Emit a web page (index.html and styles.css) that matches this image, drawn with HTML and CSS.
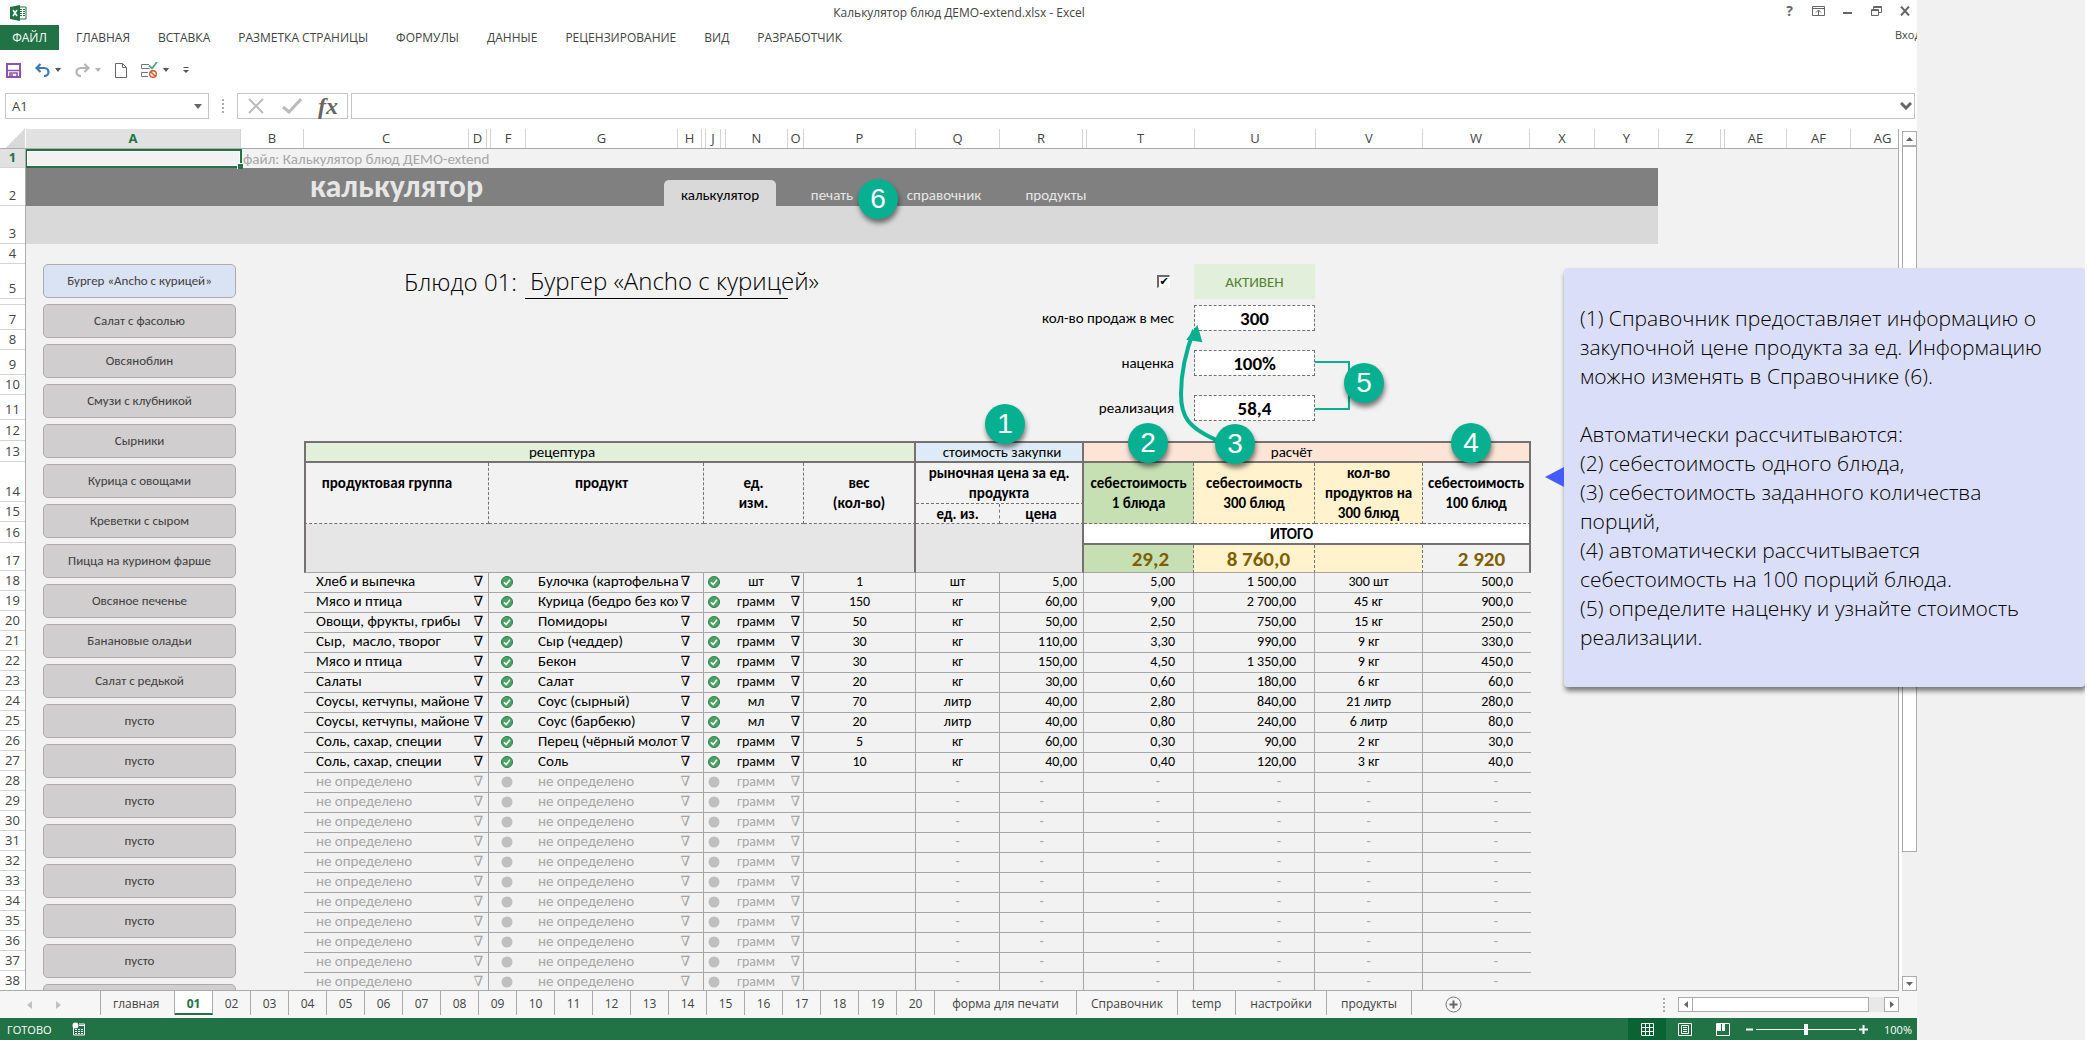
FILE: index.html
```html
<!DOCTYPE html>
<html lang="ru">
<head>
<meta charset="utf-8">
<title>Калькулятор блюд ДЕМО-extend.xlsx - Excel</title>
<link rel="stylesheet" href="styles.css">
</head>
<body>
<svg class="sprite" aria-hidden="true">
  <symbol id="ok" viewBox="0 0 12 12"><circle cx="6" cy="6" r="5.5" fill="#4aa564" stroke="#2c7c46"/><path d="M3 6.2l2.2 2.3L9 3.8" fill="none" stroke="#fff" stroke-width="1.6"/></symbol>
  <symbol id="off" viewBox="0 0 12 12"><circle cx="6" cy="6" r="5.5" fill="#bfbfbf"/></symbol>
  <symbol id="caret" viewBox="0 0 6 4"><path d="M0 0h6L3 4z" fill="currentColor"/></symbol>
</svg>

<div class="app">
  <header class="titlebar">
    <svg class="logo" width="17" height="16" viewBox="0 0 17 16"><path d="M8 2h8v12H8z" fill="#fff" stroke="#217346"/><path d="M10 4.500h2M13 4.500h2M10 6.500h2M13 6.500h2M10 8.500h2M13 8.500h2M10 10.500h2M13 10.500h2" stroke="#217346"/><path d="M0 2l10-2v16L0 14z" fill="#217346"/><path d="M3 5l4 6M7 5l-4 6" stroke="#fff" stroke-width="1.500"/></svg>
    <h1 class="doc-title">Калькулятор блюд ДЕМО-extend.xlsx - Excel</h1>
    <div class="win-buttons">
      <button class="win help" aria-label="Справка">?</button>
      <button class="win" aria-label="Параметры ленты"><svg width="13" height="10" viewBox="0 0 13 10"><path d="M.5.5h12v9H.5zM1 2.500h11M6.500 9V4M4 6.500L6.500 4 9 6.500" fill="none" stroke="#666"/></svg></button>
      <button class="win" aria-label="Свернуть"><svg width="10" height="10" viewBox="0 0 10 10"><path d="M0 7h9" stroke="#666" stroke-width="2"/></svg></button>
      <button class="win" aria-label="Развернуть"><svg width="11" height="10" viewBox="0 0 11 10"><path d="M.5 3.500h7v6h-7zM.5 4.500h7M2.500 3V.5h8v6H8M2.500 1.500h8" fill="none" stroke="#666"/></svg></button>
      <button class="win" aria-label="Закрыть"><svg width="11" height="10" viewBox="0 0 11 10"><path d="M1 .5l8 9M9 .5l-8 9" stroke="#666" stroke-width="2"/></svg></button>
    </div>
  </header>

  <nav class="ribbon">
    <button class="file">ФАЙЛ</button>
    <button>ГЛАВНАЯ</button>
    <button>ВСТАВКА</button>
    <button>РАЗМЕТКА СТРАНИЦЫ</button>
    <button>ФОРМУЛЫ</button>
    <button>ДАННЫЕ</button>
    <button>РЕЦЕНЗИРОВАНИЕ</button>
    <button>ВИД</button>
    <button>РАЗРАБОТЧИК</button>
    <span class="login"><a href="#">Вход</a></span>
  </nav>

  <div class="quick">
    <button aria-label="Сохранить"><svg width="15" height="15" viewBox="0 0 15 15"><path d="M1 1h13v13H1z" fill="none" stroke="#8d53ad" stroke-width="2"/><path d="M2 7.500h11M4 14v-4h7v4M6 11v3" fill="none" stroke="#8d53ad" stroke-width="1.600"/></svg></button>
    <button aria-label="Отменить"><svg width="15" height="14" viewBox="0 0 15 14"><path d="M5.500 1L1.500 5l4 4M1.500 5H9c6 0 6 8 0 8" fill="none" stroke="#3c78b8" stroke-width="2.200"/></svg><svg class="caret" width="6" height="4"><use href="#caret"/></svg></button>
    <button class="dim" aria-label="Вернуть"><svg width="15" height="14" viewBox="0 0 15 14"><path d="M9.500 1l4 4-4 4M13.500 5H6C0 5 0 13 6 13" fill="none" stroke="#b5b5b5" stroke-width="2.200"/></svg><svg class="caret" width="6" height="4"><use href="#caret"/></svg></button>
    <button aria-label="Создать"><svg width="12" height="15" viewBox="0 0 12 15"><path d="M.5.5h7l4 4v10H.5zM7.500.5v4h4" fill="none" stroke="#666"/></svg></button>
    <button aria-label="Проверка данных"><svg width="17" height="16" viewBox="0 0 17 16"><path d="M8 2.500H.5v4h8M7 10.500H.5v4H7" fill="none" stroke="#777"/><path d="M8 3.500l3 3L16 0" fill="none" stroke="#4ca58a" stroke-width="1.800"/><circle cx="12" cy="12" r="3.300" fill="none" stroke="#d9532c" stroke-width="1.400"/><path d="M9.700 9.700l4.600 4.600" stroke="#d9532c" stroke-width="1.400"/></svg><svg class="caret" width="6" height="4"><use href="#caret"/></svg></button>
    <button aria-label="Настройка панели"><svg width="6" height="6" viewBox="0 0 6 6"><path d="M.5.5h5" stroke="#555"/><path d="M0 3h6L3 6z" fill="#555"/></svg></button>
  </div>

  <div class="formula-row">
    <label class="name-box"><input type="text" value="A1" aria-label="Имя ячейки"><svg width="8" height="5" viewBox="0 0 8 5"><path d="M0 0h8L4 5z" fill="#666"/></svg></label>
    <svg class="grip" width="2" height="14" viewBox="0 0 2 14"><path d="M0 0h2v2H0zM0 4h2v2H0zM0 8h2v2H0zM0 12h2v2H0z" fill="#ababab"/></svg>
    <div class="fx-box">
      <button aria-label="Отмена"><svg width="18" height="16" viewBox="0 0 18 16"><path d="M2 1l14 14M16 1L2 15" stroke="#bbb" stroke-width="2"/></svg></button>
      <button aria-label="Ввод"><svg width="20" height="16" viewBox="0 0 20 16"><path d="M1 9l6 5L19 1" fill="none" stroke="#bbb" stroke-width="3"/></svg></button>
      <button class="fx" aria-label="Вставить функцию">fx</button>
    </div>
    <label class="formula"><input type="text" aria-label="Строка формул"><svg width="12" height="8" viewBox="0 0 12 8"><path d="M1 1l5 5 5-5" fill="none" stroke="#666" stroke-width="3"/></svg></label>
  </div>

  <div class="workspace">
    <div class="sheet">
      <div class="col-heads" id="cols"><div class="corner"></div></div>
      <div class="sheet-body">
        <div class="row-heads" id="rows"></div>
        <main class="canvas">
          <div class="file-row"><div class="selected-cell"></div><span>файл: Калькулятор блюд ДЕМО-extend</span></div>
          <div class="band">
            <h2>калькулятор</h2>
            <nav class="tabs">
              <a class="on" href="#">калькулятор</a>
              <a href="#">печать</a>
              <a href="#">справочник</a>
              <a href="#">продукты</a>
            </nav>
          </div>
          <div class="subband"></div>
          <div class="content">
            <aside class="dishes" id="dishes"></aside>
            <section class="dish">
              <form class="dish-form">
                <div class="dish-title">
                  <label for="active">Блюдо 01:</label>
                  <span class="dish-name">Бургер «Ancho с курицей»</span>
                  <input id="active" class="active-check" type="checkbox" checked>
                </div>
                <output class="state">АКТИВЕН</output>
                <label for="sales">кол-во продаж в мес</label><input id="sales" type="text" value="300">
                <label for="markup">наценка</label><input id="markup" class="dark" type="text" value="100%">
                <label for="price">реализация</label><input id="price" type="text" value="58,4">
              </form>
              <table class="recipe">
                <colgroup><col class="c-group"><col class="c-d"><col class="c-f"><col class="c-g"><col class="c-h"><col class="c-j"><col class="c-n"><col class="c-o"><col class="c-p"><col class="c-q"><col class="c-q"><col class="c-t"><col class="c-u"><col class="c-v"><col class="c-w"></colgroup>
                <thead>
                  <tr class="r13"><th class="green" colspan="9">рецептура</th><th class="blue" colspan="2">стоимость закупки</th><th class="peach" colspan="4">расчёт</th></tr>
                  <tr class="r14">
                    <th class="one left" colspan="2" rowspan="2">продуктовая группа</th>
                    <th class="one mid" colspan="3" rowspan="2">продукт</th>
                    <th colspan="3" rowspan="2">ед.<br>изм.</th>
                    <th class="thick" rowspan="2">вес<br>(кол-во)</th>
                    <th class="thick" colspan="2">рыночная цена за ед.<br>продукта</th>
                    <th class="bg-green" rowspan="2">себестоимость<br>1 блюда</th>
                    <th class="bg-yellow" rowspan="2">себестоимость<br>300 блюд</th>
                    <th class="bg-yellow" rowspan="2">кол-во<br>продуктов на<br>300 блюд</th>
                    <th class="thick" rowspan="2">себестоимость<br>100 блюд</th>
                  </tr>
                  <tr class="r15"><th>ед. из.</th><th class="thick">цена</th></tr>
                  <tr class="r16"><td class="blank left" colspan="9" rowspan="2"></td><td class="blank" colspan="2" rowspan="2"></td><th class="total-title" colspan="4">ИТОГО</th></tr>
                  <tr class="r17"><td class="bg-green">29,2</td><td class="bg-yellow">8 760,0</td><td class="bg-yellow"></td><td class="thick">2 920</td></tr>
                </thead>
                <tbody id="data"></tbody>
              </table>
            </section>
          </div>
        </main>
      </div>
    </div>
    <div class="vscroll">
      <button aria-label="Вверх"><svg width="7" height="4" viewBox="0 0 7 4"><path d="M0 4h7L3.500 0z" fill="#666"/></svg></button>
      <div class="thumb"></div>
      <button aria-label="Вниз"><svg width="7" height="4" viewBox="0 0 7 4"><path d="M0 0h7L3.500 4z" fill="#666"/></svg></button>
    </div>
  </div>

  <nav class="sheet-tabs">
    <div class="tab-arrows">
      <svg width="5" height="8" viewBox="0 0 5 8"><path d="M5 0v8L0 4z" fill="#c0c0c0"/></svg>
      <svg width="5" height="8" viewBox="0 0 5 8"><path d="M0 0v8l5-4z" fill="#c0c0c0"/></svg>
    </div>
    <div class="tab-list" id="tabs"></div>
    <button class="add" aria-label="Новый лист"><svg width="17" height="17" viewBox="0 0 17 17"><circle cx="8.500" cy="8.500" r="7.500" fill="none" stroke="#777"/><path d="M4.500 8.500h8M8.500 4.500v8" stroke="#666" stroke-width="2"/></svg></button>
    <svg class="grip right" width="2" height="14" viewBox="0 0 2 14"><path d="M0 0h2v2H0zM0 4h2v2H0zM0 8h2v2H0zM0 12h2v2H0z" fill="#ababab"/></svg>
    <div class="hscroll">
      <button aria-label="Влево"><svg width="4" height="7" viewBox="0 0 4 7"><path d="M4 0v7L0 3.500z" fill="#666"/></svg></button>
      <div class="thumb"></div><div class="track"></div>
      <button aria-label="Вправо"><svg width="4" height="7" viewBox="0 0 4 7"><path d="M0 0v7l4-3.500z" fill="#666"/></svg></button>
    </div>
  </nav>

  <footer class="status">
    <span>ГОТОВО</span>
    <svg width="14" height="14" viewBox="0 0 14 14"><path d="M1.500 5v8h11V2H7" fill="none" stroke="#fff"/><circle cx="3.500" cy="3.500" r="3" fill="#fff"/><path d="M7 3.500h5M3 7.500h2M6 7.500h2M9 7.500h2M3 9.500h2M6 9.500h2M9 9.500h2M3 11.500h2M6 11.500h2M9 11.500h2" stroke="#fff"/></svg>
    <div class="views">
      <button class="on" aria-label="Обычный"><svg width="13" height="13" viewBox="0 0 13 13"><path d="M.5.5h12v12H.5zM.5 4.500h12M.5 8.500h12M4.500.5v12M8.500.5v12" fill="none" stroke="#fff"/></svg></button>
      <button aria-label="Разметка страницы"><svg width="14" height="13" viewBox="0 0 14 13"><path d="M.5.5h13v12H.5zM3.500 2.500h7v8h-7zM5 4.500h4M5 6.500h4M5 8.500h4" fill="none" stroke="#fff"/></svg></button>
      <button aria-label="Страничный режим"><svg width="14" height="13" viewBox="0 0 14 13"><path d="M.5.5h13v12H.5z" fill="none" stroke="#fff"/><path d="M1 1h4v7H1zM6 1h3v7H6z" fill="#fff"/></svg></button>
    </div>
    <button class="zoom-btn" aria-label="Уменьшить"><svg width="7" height="7" viewBox="0 0 7 7"><path d="M0 3.500h7" stroke="#fff" stroke-width="2"/></svg></button>
    <input class="zoom" type="range" min="10" max="190" value="100" aria-label="Масштаб">
    <button class="zoom-btn" aria-label="Увеличить"><svg width="9" height="9" viewBox="0 0 9 9"><path d="M0 4.500h9M4.500 0v9" stroke="#fff" stroke-width="2"/></svg></button>
    <span class="percent">100%</span>
  </footer>
</div>

<svg class="links" width="180" height="130" viewBox="0 0 180 130">
  <path d="M44 124C10 110 4 98 4 76 4 52 10 30 17 12" fill="none" stroke="#08b092" stroke-width="4"/>
  <path d="M20 9L11 21 24 23z" fill="#08b092" stroke="#08b092" stroke-width="2"/>
  <path d="M138 44h34v47h-34" fill="none" stroke="#08b092" stroke-width="2"/>
</svg>
<span class="pin p1">1</span>
<span class="pin p2">2</span>
<span class="pin p3">3</span>
<span class="pin p4">4</span>
<span class="pin p5">5</span>
<span class="pin p6">6</span>

<aside class="callout">
  <p>(1) Справочник предоставляет информацию о закупочной цене продукта за ед. Информацию можно изменять в Справочнике (6).</p>
  <p>Автоматически рассчитываются:<br>(2) себестоимость одного блюда,<br>(3) себестоимость заданного количества порций,<br>(4) автоматически рассчитывается<br>себестоимость на 100 порций блюда.<br>(5) определите наценку и узнайте стоимость реализации.</p>
</aside>
<script src="script.js"></script>
</body>
</html>
```
FILE: styles.css
```css
* { box-sizing: border-box; }
body { margin: 0; height: 100vh; overflow: hidden; background: #f1f1f1; border-right: 2px solid #fff; position: relative; font-family: Carlito, "Open Sans", "Noto Sans", sans-serif; font-size: 15px; color: #000; }
button, input { font: inherit; color: inherit; margin: 0; padding: 0; border: 0; background: none; }
a { color: inherit; text-decoration: none; }
svg { display: block; flex: none; }
.sprite { position: absolute; width: 0; height: 0; }

.app { width: calc(100% - 168px); height: 100vh; display: flex; flex-direction: column; overflow: hidden; background: #fff; }
.titlebar, .ribbon, .formula-row, .col-heads, .row-heads, .sheet-tabs, .status { font-family: "Open Sans", "Noto Sans", sans-serif; font-size: 12px; color: #444; }

.titlebar { display: flex; align-items: center; height: 25px; padding-left: 10px; }
.doc-title { flex: 1; margin: 0; padding-left: 116px; text-align: center; font-size: 12px; font-weight: 400; }
.win-buttons { display: flex; padding-bottom: 3px; margin-right: -3px; }
.win { display: flex; justify-content: center; width: 29px; height: 14px; align-items: center; color: #666; }
.help { font-size: 14px; font-weight: 700; line-height: 14px; }

.ribbon { display: flex; height: 25px; gap: 28px; white-space: nowrap; }
.ribbon .file { width: 59px; margin-right: -11px; background: #217346; color: #fff; }
.login { width: 22px; margin-left: auto; overflow: hidden; line-height: 20px; font-size: 11px; }

.quick { display: flex; align-items: center; height: 43px; padding: 0 6px 3px; gap: 14px; color: #555; }
.quick button { display: flex; align-items: center; gap: 5px; }
.quick .dim { color: #b5b5b5; }

.formula-row { display: flex; align-items: center; height: 36px; padding: 0 2px 10px 5px; }
.name-box, .formula, .fx-box { display: flex; align-items: center; height: 26px; border: 1px solid #c6c6c6; }
.name-box { width: 204px; padding: 0 6px; font-size: 13px; }
.name-box input, .formula input { flex: 1; min-width: 0; height: 22px; }
.grip { margin: 0 13px; }
.fx-box { width: 111px; padding: 0 9px; justify-content: space-between; }
.fx { font: italic 700 24px/24px "Liberation Serif", serif; color: #666; }
.formula { flex: 1; margin-left: 3px; padding: 0 2px; }

.workspace { flex: 1; min-height: 0; display: flex; }
.sheet { flex: 1; min-width: 0; display: flex; flex-direction: column; border-right: 1px solid #ababab; border-bottom: 1px solid #ababab; overflow: hidden; }
.col-heads { display: flex; flex: none; height: 20px; border-bottom: 1px solid #ababab; }
.col-heads div { flex: none; border-right: 1px solid #d4d4d4; text-align: center; line-height: 19px; font-size: 13px; }
.col-heads .corner { width: 26px; background: linear-gradient(135deg, transparent 55%, #d9d9d9 55%); border-color: #fff; }
.col-heads .on { background: #e1e1e1; color: #217346; font-weight: 700; }
.sheet-body { flex: 1; min-height: 0; display: flex; }
.row-heads { flex: none; width: 26px; border-right: 1px solid #ababab; overflow: hidden; }
.row-heads div { display: flex; align-items: flex-end; justify-content: center; border-bottom: 1px solid #d4d4d4; font-size: 13px; line-height: 19px; overflow: hidden; }
.row-heads .on { background: #e1e1e1; color: #217346; font-weight: 700; }
.canvas { flex: 1; min-width: 0; overflow: hidden; background: #f2f2f2; }

.file-row { display: flex; height: 19px; color: #a6a6a6; line-height: 20px; }
.selected-cell { width: 216px; margin-right: 1px; border: 2px solid #217346; border-left-width: 1px; box-shadow: inset 0 0 0 1px #fff; position: relative; }
.selected-cell::after { content: ""; position: absolute; right: -3px; bottom: -3px; width: 5px; height: 5px; background: #217346; border: solid #fff; border-width: 1px 0 0 1px; }
.band { display: flex; width: 1632px; height: 38px; background: #808080; color: #e6e6e6; }
.band h2 { width: 638px; margin: 0; padding-left: 284px; font-size: 32px; line-height: 38px; }
.tabs { display: flex; align-items: flex-end; }
.tabs a { width: 112px; height: 26px; line-height: 31px; text-align: center; border-radius: 5px 5px 0 0; }
.tabs .on { background: #d9d9d9; color: #000; }
.subband { width: 1632px; height: 38px; background: #d9d9d9; }

.content { display: flex; gap: 68px; padding: 20px 0 0 17px; }
.dishes { display: flex; flex-direction: column; gap: 6px; width: 193px; }
.dishes button { height: 34px; padding-bottom: 2px; border: 1px solid #aeaaaa; border-radius: 5px; background: #d0cece; color: #404040; font-size: 13px; }
.dishes .on { background: #dae3f3; }

.dish-form { display: grid; grid-template-columns: 870px 121px; column-gap: 20px; row-gap: 19px; height: 177px; align-content: start; align-items: center; }
.dish-form > label { text-align: right; }
.dish-title { display: flex; align-items: center; height: 35px; margin-bottom: -13px; padding-left: 100px; font: 300 24px "Open Sans", "Noto Sans", sans-serif; white-space: nowrap; }
.dish-title label { width: 121px; }
.dish-name { width: 263px; padding-left: 5px; line-height: 34px; border-bottom: 1px solid #000; }
.active-check { appearance: none; width: 13px; height: 13px; margin: 0 4px 0 auto; border: 1px solid #fff; border-top: 2px solid #696969; border-left: 2px solid #696969; background: #fff; display: grid; place-content: center; }
.active-check:checked::before { content: "✔"; font: 11px/10px "DejaVu Sans", sans-serif; }
.state { height: 35px; margin-bottom: -13px; background: #e2efda; color: #548235; text-align: center; line-height: 37px; }
.dish-form input[type="text"] { width: 121px; height: 26px; background: #fff; border: 1px dashed #767171; text-align: center; font-size: 19px; font-weight: 700; }
.dish-form .dark { border-color: #000; }

.recipe { width: 1227px; table-layout: fixed; border-collapse: separate; border-spacing: 0; line-height: 20px; }
.c-group { width: 165px; } .c-d { width: 20px; } .c-f { width: 37px; } .c-g { width: 152px; } .c-h { width: 26px; }
.c-j { width: 20px; } .c-n { width: 64px; } .c-o { width: 16px; } .c-p { width: 112px; } .c-q { width: 84px; }
.c-t { width: 110px; } .c-u { width: 121px; } .c-v { width: 108px; } .c-w { width: 108px; }
.recipe th, .recipe td { padding: 0; overflow: hidden; white-space: nowrap; }
.recipe thead th, .recipe thead td { border: 0 dashed #767171; border-width: 0 1px 1px 0; }
.r13 th { height: 22px; font-weight: 400; line-height: 18px; }
.recipe .r13 th { border-style: solid; border-width: 2px 2px 2px 0; }
.recipe .r13 .green { padding-right: 96px; background: #e2efda; border-left-width: 2px; }
.recipe .blue { padding-left: 6px; background: #ddebf7; }
.recipe .peach { padding-right: 30px; background: #fce4d6; }
.r14 { height: 40px; } .r15 { height: 20px; } .r16 { height: 21px; } .r17 { height: 28px; }
.recipe .r15 th { line-height: 18px; }
.recipe .one { padding: 0 20px 20px 0; }
.recipe .mid { padding: 0 0 20px 11px; }
.recipe .left { border-left: 2px solid #767171; }
.recipe .thick { border-right: 2px solid #767171; }
.recipe .blank { background: #e6e6e6; border-right: 2px solid #767171; border-bottom: 1px solid #a6a6a6; }
.recipe .total-title { padding-right: 30px; background: #fff; border-right: 2px solid #767171; border-bottom: 2px solid #767171; border-bottom-style: solid; line-height: 18px; }
.recipe .r17 td { border-bottom: 1px solid #a6a6a6; padding-right: 24px; text-align: right; font-size: 21px; font-weight: 700; color: #7f6000; }
.recipe .bg-green { background: #c6e0b4; }
.recipe .bg-yellow { background: #fff2cc; }
.recipe tbody td { height: 20px; padding-bottom: 2px; line-height: 17px; font-size: 14px; border-bottom: 1px solid #a6a6a6; text-align: center; }
.recipe tbody td:nth-child(1), .recipe tbody td:nth-child(4) { text-align: left; padding-left: 12px; font-size: 15px; }
.recipe tbody td:nth-child(2), .recipe tbody td:nth-child(5), .recipe tbody td:nth-child(n+8):nth-child(-n+14) { border-right: 1px solid #a6a6a6; }
.recipe tbody td:nth-child(3) { padding-right: 2px; }
.recipe tbody td:nth-child(5) { padding-right: 10px; }
.recipe tbody td:nth-child(11) { text-align: right; padding-right: 6px; }
.recipe tbody td:nth-child(12), .recipe tbody td:nth-child(13), .recipe tbody td:nth-child(15) { text-align: right; padding-right: 18px; }
.recipe .undef td { color: #a6a6a6; }
.recipe .undef td:nth-child(11) { text-align: center; padding-right: 0; }
.recipe .undef td:nth-child(12), .recipe .undef td:nth-child(13), .recipe .undef td:nth-child(15) { padding-right: 33px; }
.recipe td svg { width: 12px; height: 12px; margin: 0 auto; }
.recipe tbody .drop { font-family: "DejaVu Serif", serif; font-size: 14px; }

.vscroll { display: flex; flex-direction: column; width: 18px; padding: 2px 0 0 3px; }
.vscroll button, .hscroll button { display: flex; align-items: center; justify-content: center; flex: none; width: 15px; height: 15px; border: 1px solid #ababab; background: #fff; }
.vscroll .thumb { flex: 1; margin-bottom: 124px; border: 1px solid #ababab; background: #fff; box-shadow: 0 124px #f1f1f1; }

.sheet-tabs { display: flex; align-items: center; flex: none; height: 27px; background: #f6f6f6; padding-right: 18px; }
.tab-arrows { display: flex; gap: 24px; width: 100px; padding-left: 27px; }
.tab-list { display: flex; height: 27px; padding-bottom: 3px; }
.tab-list a { padding: 0 14px; line-height: 26px; border-right: 1px solid #ababab; white-space: nowrap; }
.tab-list a:first-child { border-left: 1px solid #ababab; width: 75px; padding: 0 12px; }
.tab-list .num { width: 38px; padding: 0; text-align: center; }
.tab-list .wide { width: 142px; text-align: center; }
.tab-list .on { background: #fff; color: #217346; font-weight: 700; border-bottom: 2px solid #217346; }
.add { margin-left: 33px; }
.right { margin-left: auto; }
.hscroll { display: flex; width: 221px; }
.hscroll .thumb { flex: 1; border: 1px solid #ababab; border-left: 0; background: #fff; }
.hscroll .track { width: 15px; background: #e8e8e8; }

.status { display: flex; align-items: center; flex: none; height: 22px; background: #217346; color: #fff; padding: 0 5px 0 7px; font-size: 11px; gap: 20px; }
.views { display: flex; margin-left: auto; }
.views button { display: flex; align-items: center; justify-content: center; width: 38px; height: 22px; }
.views .on { background: #0a6332; }
.status .views { margin-right: -16px; }
.percent { margin-left: -4px; }
.zoom { appearance: none; width: 100px; height: 12px; margin: 0 -17px; background: linear-gradient(#fff, #fff) center / 100% 1px no-repeat; }
.zoom::-webkit-slider-thumb { appearance: none; width: 4px; height: 11px; background: #fff; }

.links { position: absolute; left: 1177px; top: 318px; }
.pin { position: absolute; width: 40px; height: 40px; border-radius: 50%; background: #08b092; color: #fff; text-align: center; font: 28px/40px "Liberation Sans", sans-serif; box-shadow: 1px 4px 5px rgba(0, 0, 0, .5); }
.p1 { left: 985px; top: 404px; } .p2 { left: 1128px; top: 423px; } .p3 { left: 1215px; top: 424px; }
.p4 { left: 1451px; top: 423px; } .p5 { left: 1344px; top: 363px; } .p6 { left: 858px; top: 179px; }

.callout { position: absolute; top: 268px; right: 0; width: 521px; height: 419px; padding: 36px 28px 0 16px; background: #dbdef9; border-radius: 4px; box-shadow: 1px 4px 5px rgba(0, 0, 0, .5); font: 300 21px/29px "Open Sans", "Noto Sans", sans-serif; }
.callout::before { content: ""; position: absolute; left: -19px; top: 199px; border: 10px solid transparent; border-left: 0; border-right: 19px solid #445cff; }
.callout p { margin: 0 0 29px; }
```
FILE: script.js
```js
const el = (id) => document.getElementById(id);

const columns = [['A', 215], ['B', 63], ['C', 165], ['D', 18], ['', 4], ['F', 35], ['G', 152], ['H', 24], ['', 4], ['J', 15], ['', 5], ['N', 62], ['O', 16], ['P', 112], ['Q', 84], ['R', 83], ['', 4], ['T', 108], ['U', 121], ['V', 107], ['W', 107], ['X', 65], ['Y', 64], ['Z', 62], ['', 4], ['AE', 62], ['AF', 64], ['AG', 64]];
el('cols').innerHTML += columns.map(([name, w]) => `<div class="${name === 'A' ? 'on' : ''}" style="width:${w}px">${name}</div>`).join('');

const heights = [19, 38, 38, 20, 35, 6, 25, 20, 25, 20, 25, 21, 21, 40, 20, 21, 28];
for (let i = 1; i <= 38; i++) {
  el('rows').innerHTML += `<div class="${i === 1 ? 'on' : ''}" style="height:${heights[i - 1] || 20}px">${i === 6 ? '' : i}</div>`;
}

const dishes = ['Бургер «Ancho с курицей»', 'Салат с фасолью', 'Овсяноблин', 'Смузи с клубникой', 'Сырники', 'Курица с овощами', 'Креветки с сыром', 'Пицца на курином фарше', 'Овсяное печенье', 'Банановые оладьи', 'Салат с редькой'];
while (dishes.length < 19) dishes.push('пусто');
el('dishes').innerHTML = dishes.map((d, i) => `<button class="${i ? '' : 'on'}">${d}</button>`).join('');

const data = [
  ['Хлеб и выпечка', 'Булочка (картофельная)', 'шт', '1', 'шт', '5,00', '5,00', '1 500,00', '300 шт', '500,0'],
  ['Мясо и птица', 'Курица (бедро без кожи)', 'грамм', '150', 'кг', '60,00', '9,00', '2 700,00', '45 кг', '900,0'],
  ['Овощи, фрукты, грибы', 'Помидоры', 'грамм', '50', 'кг', '50,00', '2,50', '750,00', '15 кг', '250,0'],
  ['Сыр,&nbsp; масло, творог', 'Сыр (чеддер)', 'грамм', '30', 'кг', '110,00', '3,30', '990,00', '9 кг', '330,0'],
  ['Мясо и птица', 'Бекон', 'грамм', '30', 'кг', '150,00', '4,50', '1 350,00', '9 кг', '450,0'],
  ['Салаты', 'Салат', 'грамм', '20', 'кг', '30,00', '0,60', '180,00', '6 кг', '60,0'],
  ['Соусы, кетчупы, майонезы', 'Соус (сырный)', 'мл', '70', 'литр', '40,00', '2,80', '840,00', '21 литр', '280,0'],
  ['Соусы, кетчупы, майонезы', 'Соус (барбекю)', 'мл', '20', 'литр', '40,00', '0,80', '240,00', '6 литр', '80,0'],
  ['Соль, сахар, специи', 'Перец (чёрный молотый)', 'грамм', '5', 'кг', '60,00', '0,30', '90,00', '2 кг', '30,0'],
  ['Соль, сахар, специи', 'Соль', 'грамм', '10', 'кг', '40,00', '0,40', '120,00', '3 кг', '40,0'],
];
const empty = ['не определено', 'не определено', 'грамм', '', '-', '-', '-', '-', '-', '-'];
while (data.length < 21) data.push(empty);
el('data').innerHTML = data.map((r) => {
  const icon = `<td><svg><use href="#${r === empty ? 'off' : 'ok'}"/></svg></td>`;
  const drop = '<td class="drop">∇</td>';
  const [group, product, unit, ...rest] = r;
  return `<tr class="${r === empty ? 'undef' : ''}"><td>${group}</td>${drop}${icon}<td>${product}</td>${drop}${icon}<td>${unit}</td>${drop}${rest.map((v) => `<td>${v}</td>`).join('')}</tr>`;
}).join('');

const nums = Array.from({ length: 20 }, (_, i) => String(i + 1).padStart(2, '0'));
const tab = (name, cls = '') => `<a href="#" class="${cls}">${name}</a>`;
el('tabs').innerHTML = tab('главная') + nums.map((n) => tab(n, n === '01' ? 'num on' : 'num')).join('')
  + tab('форма для печати', 'wide') + ['Справочник', 'temp', 'настройки', 'продукты'].map((n) => tab(n)).join('');
```
